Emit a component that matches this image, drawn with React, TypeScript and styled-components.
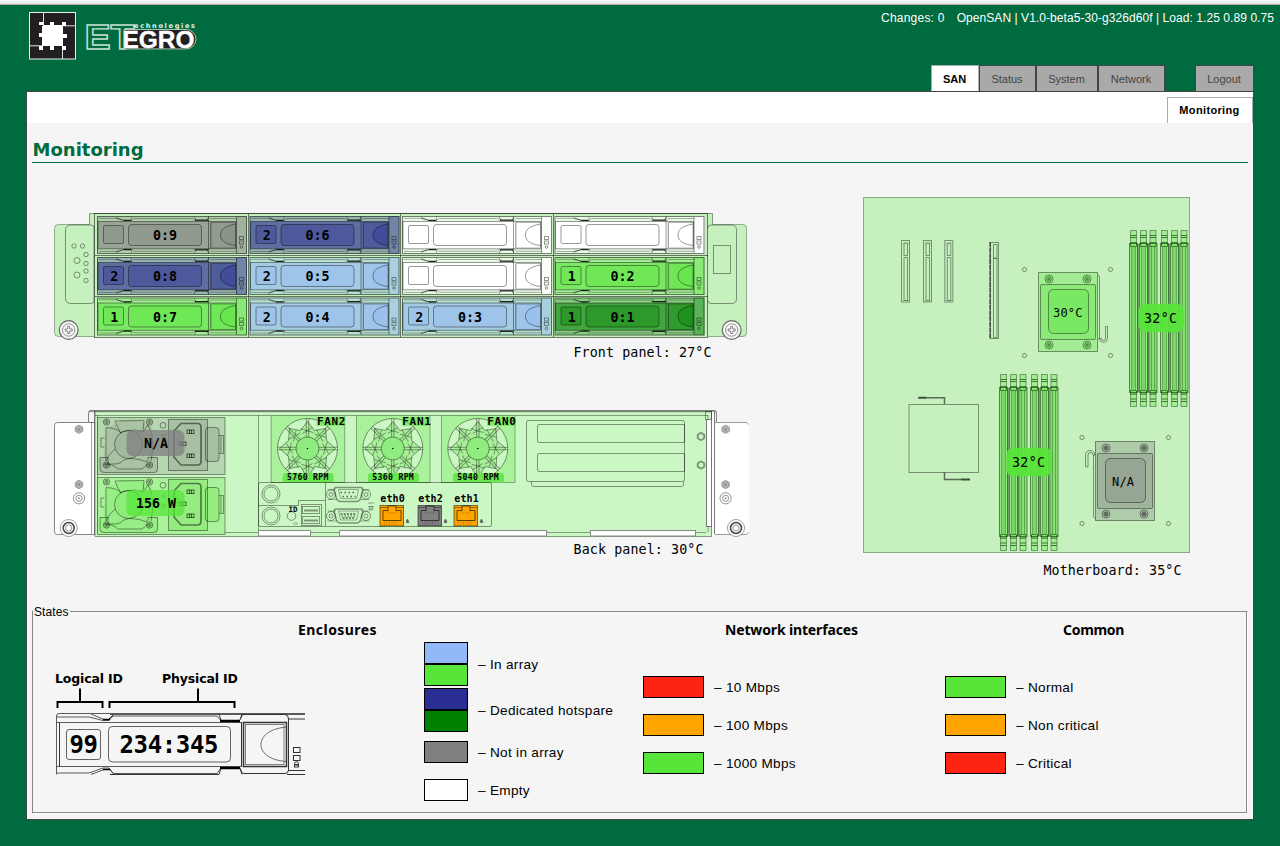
import React from 'react';
import styled, { createGlobalStyle } from 'styled-components';

const GREEN = '#006b3f';
const OK = '#57e539';
const BOARD = '#c6f0be';
const MONO = '"DejaVu Sans Mono", monospace';
const SANS = '"Liberation Sans", Arial, sans-serif';

const Global = createGlobalStyle`
  body { margin: 0; background: ${GREEN}; font-family: ${SANS}; font-size: 12px; color: #000; }
  svg { display: block; }
`;

const Page = styled.div`
  width: 1280px;
  height: 846px;
  box-sizing: border-box;
  overflow: hidden;
  background: ${GREEN};
`;
const TopEdge = styled.div`
  height: 5px;
  background: linear-gradient(#fff 0 1px, #efefee 1px 3px, #e3e1de 3px 4px, #b5b1a9 4px 5px);
`;
const Header = styled.header`
  height: 60px;
  box-sizing: border-box;
  display: flex;
  justify-content: space-between;
  padding: 5px 6px 0 27px;
`;
const StatusLine = styled.div`
  display: flex;
  gap: 12px;
  padding-top: 1px;
  color: #fff;
  line-height: 14px;
  white-space: pre;
`;
const StatusText = styled.span<{ $ls: number }>`
  letter-spacing: ${p => p.$ls}px;
`;
const TabBar = styled.nav`
  height: 26px;
  display: flex;
  justify-content: flex-end;
  padding-right: 26px;
`;
const Tab = styled.a<{ $w: number; $active?: boolean; $gap?: number }>`
  box-sizing: border-box;
  width: ${p => p.$w}px;
  margin-left: ${p => p.$gap ?? 0}px;
  padding-right: 1px;
  border: 1px solid ${p => (p.$active ? '#aaa' : '#444')};
  border-bottom: 0;
  background: ${p => (p.$active ? '#fff' : '#a9a9a9')};
  color: ${p => (p.$active ? '#000' : '#444')};
  font-weight: ${p => (p.$active ? 'bold' : 'normal')};
  font-size: 11px;
  line-height: 27px;
  text-align: center;
`;
const Frame = styled.main`
  box-sizing: border-box;
  width: 1228px;
  height: 729px;
  margin-left: 26px;
  border: 1px solid #444;
  background: #f5f5f5;
`;
const SubBar = styled.div`
  height: 31px;
  background: #fff;
  display: flex;
  justify-content: flex-end;
  align-items: flex-end;
`;
const SubTab = styled.a`
  box-sizing: border-box;
  width: 86px;
  height: 26px;
  padding-right: 1px;
  border: 1px solid #aaa;
  border-bottom: 0;
  font: bold 11px/25px ${SANS};
  letter-spacing: 0.36px;
  text-align: center;
`;
const Title = styled.h1`
  box-sizing: border-box;
  margin: 0 5px;
  height: 40px;
  padding: 15px 0 0 0.6px;
  border-bottom: 1px solid ${GREEN};
  color: ${GREEN};
  font: bold 18px/24px "DejaVu Sans", sans-serif;
`;
const Diagrams = styled.section`
  display: flex;
  height: 440px;
  padding: 27px 0 0 21px;
  gap: 95px;
  box-sizing: border-box;
`;
const Panels = styled.div`
  display: flex;
  flex-direction: column;
`;
const States = styled.fieldset`
  box-sizing: border-box;
  width: 1216px;
  height: 211px;
  margin: 0 0 0 5px;
  padding: 0 0 0 17px;
  border: 1px solid;
  border-color: #888 #fff #fff #888;
  box-shadow: inset -1px -1px #888;
`;
const Legend = styled.legend`
  margin-left: -17px;
  padding: 2px 1px 0;
  line-height: 14px;
  letter-spacing: 0.1px;
  background: #f5f5f5;
`;
const Columns = styled.div`
  display: flex;
`;
const Group = styled.section<{ $w: number }>`
  width: ${p => p.$w}px;
`;
const GroupTitle = styled.h2<{ $pad: number; $ls: number }>`
  margin: 0;
  padding-left: ${p => p.$pad}px;
  font: bold 14px/20px "Noto Sans", sans-serif;
  letter-spacing: ${p => p.$ls}px;
  height: 23px;
  padding-top: 1px;
  box-sizing: border-box;
  white-space: nowrap;
`;
const EnclosureBody = styled.div`
  display: flex;
  gap: 117px;
`;
const StateList = styled.div<{ $top: number; $gap: number }>`
  display: flex;
  flex-direction: column;
  gap: ${p => p.$gap}px;
  padding-top: ${p => p.$top}px;
`;
const StateRow = styled.div<{ $top?: number }>`
  display: flex;
  align-items: center;
  gap: 10px;
  margin-top: ${p => p.$top ?? 0}px;
`;
const StateName = styled.span`
  padding-top: 2px;
  font-size: 13.6px;
  letter-spacing: 0.3px;
  line-height: 16px;
  white-space: nowrap;
`;
const Swatch = styled.div<{ $c: string; $w: number }>`
  box-sizing: border-box;
  width: ${p => p.$w}px;
  height: 22px;
  border: 1px solid #000;
  background: ${p => p.$c};
`;

const line = { fill: 'none', stroke: '#000', strokeOpacity: 0.4, strokeWidth: 1 } as const;

type LabelProps = { x: number; y: number; w?: number; size?: number; bold?: boolean; children: React.ReactNode };
const Label = ({ x, y, w, size = 13.33, bold, children }: LabelProps) => (
  <text x={x} y={y} fontFamily={MONO} fontSize={size} fontWeight={bold ? 700 : 400} textLength={w}>
    {children}
  </text>
);

const Logo = () => (
  <svg width="175" height="52" viewBox="27 10 175 52">
    <rect x="29.5" y="12.5" width="46" height="46.5" fill="#231f20" stroke="#e8f0ec" />
    <g fill="none" stroke="#d8e4de">
      <path d="M43.5 13V26M62 25.8H75M30 45.8H43M62.5 46V59" />
    </g>
    <path
      fill="#fff"
      d="M43 26V25H39V22H43V25H50V22H54V25H62V22H66V26H63V34H67V38H63V46H66V50H62V46H54V50H50V46H43V50H39V46H42V37H39V33H42V26Z"
    />
    <text x="84.500" y="48.600" fontFamily={SANS} fontWeight="700" fontSize="35" textLength="50" lengthAdjust="spacingAndGlyphs" fill={GREEN} stroke="#c4ddd0" strokeWidth="1.4">ET</text>
    <path d="M124 29.500H186a10 9.700 0 0 1 0 19.400H124Z" fill="#231f20" stroke="#cfe2d8" strokeWidth=".8" />
    <text x="122.500" y="47.700" fontFamily={SANS} fontWeight="700" fontSize="24" textLength="72" lengthAdjust="spacingAndGlyphs" fill="#fff" stroke="#fff" strokeWidth=".4">EGRO</text>
    <text x="134" y="27.6" fontFamily='"DejaVu Sans", sans-serif' fontWeight="700" fontSize="6.6" textLength="61" fill="#e6f1ec">echnologies</text>
  </svg>
);

type DriveData = { col: number; row: number; c: string; logical?: string; id?: string };
const BLUE = '#93b8f7';
const NAVY = '#2a2e92';
const DARK = '#008000';
const GREY = '#808080';
const drives: DriveData[] = [
  { col: 0, row: 0, c: GREY, id: '0:9' },
  { col: 1, row: 0, c: NAVY, logical: '2', id: '0:6' },
  { col: 2, row: 0, c: '#fff' },
  { col: 3, row: 0, c: '#fff' },
  { col: 0, row: 1, c: NAVY, logical: '2', id: '0:8' },
  { col: 1, row: 1, c: BLUE, logical: '2', id: '0:5' },
  { col: 2, row: 1, c: '#fff' },
  { col: 3, row: 1, c: OK, logical: '1', id: '0:2' },
  { col: 0, row: 2, c: OK, logical: '1', id: '0:7' },
  { col: 1, row: 2, c: BLUE, logical: '2', id: '0:4' },
  { col: 2, row: 2, c: BLUE, logical: '2', id: '0:3' },
  { col: 3, row: 2, c: DARK, logical: '1', id: '0:1' },
];
const colX = [97, 249.5, 402, 554.5];
const rowY = [216, 257, 297.5];

const Drive = ({ col, row, c, logical, id }: DriveData) => {
  const white = c === '#fff';
  return (
    <g transform={`translate(${colX[col]} ${rowY[row]})`}>
      <rect width="150" height="37.8" fill={c} fillOpacity={white ? 0.6 : 0.3} />
      <rect x="139" width="11" height="37.8" fill={c} fillOpacity={white ? 0.8 : 0.35} />
      <rect x=".7" y="5.5" width="138" height="27.3" fill={c} fillOpacity={white ? 0.95 : 0.52} />
      <rect x="6.5" y="9.5" width="20" height="18" fill={c} fillOpacity=".32" />
      <rect x="31.5" y="8.5" width="73" height="21" rx="3" fill={c} fillOpacity=".32" />
      <rect x="114" y="6.5" width="24.5" height="25.5" fill={c} fillOpacity=".28" />
      <path d="M138.5 8C127 10 123.5 14 123.5 19S127 28 138.5 29.5Z" fill={c} fillOpacity=".35" />
      <g {...line}>
        <rect x=".5" y=".5" width="149" height="37" strokeOpacity=".5" />
        <path d="M2 2.3H19l9 2.2H34L37 2.5H95l3 2h14l2-2h26M2 35.5H19l9-2.2H34l3 2h58l3-2h14l2 2h26M34.5 .5V5M34.5 33V37" strokeOpacity=".3" />
        <rect x="1" y="5.500" width="138" height="27.300" />
        <rect x="6.500" y="9.500" width="20" height="18" rx="1.500" />
        <rect x="31.500" y="8.500" width="73" height="21" rx="3" />
        <path d="M111.500 .5V37M139.500 1V37" />
        <path d="M113.500 6.500V32" strokeOpacity=".2" />
        <rect x="114" y="6.500" width="24.500" height="25.500" strokeOpacity=".3" />
        <path d="M138.500 8C127 10 123.500 14 123.500 19S127 28 138.500 29.500" />
        <g strokeOpacity=".45" strokeWidth=".9">
          <rect x="142.500" y="20.500" width="4" height="3" />
          <rect x="142.500" y="25" width="4" height="3" />
          <circle cx="144.500" cy="31" r="1.300" />
        </g>
        <path d="M19 1.800l9 3M19 36.200l9-3" strokeOpacity=".5" />
      </g>
      <path d="M98 4.200H111M98 33.800H111M27 4.300h7M27 33.600h7" stroke="#000" strokeOpacity=".8" strokeWidth="1.300" />
      <path d="M97 1l2 3M112 1l-2 3M97 37l2-3M112 37l-2-3" stroke="#000" strokeOpacity=".5" />
      {logical && <Label bold x={13.3} y={24}>{logical}</Label>}
      {id && <Label bold x={56} y={24}>{id}</Label>}
    </g>
  );
};

const Screw = ({ x, y }: { x: number; y: number }) => (
  <g transform={`translate(${x} ${y})`} fill="#f7f7f7" stroke="#666">
    <circle r="9.4" strokeWidth="1.2" />
    <circle r="6.2" fill="none" stroke="#888" strokeWidth=".9" />
    <path d="M-1 -3.5H1V-1H3.5V1H1V3.5H-1V1H-3.5V-1H-1Z" fill="#fff" strokeWidth=".8" />
  </g>
);

const FrontPanel = () => (
  <svg width="715" height="190" viewBox="48 190 715 190">
    <g fill={BOARD} stroke="#7d9a79">
      <rect x="54.5" y="224.5" width="45" height="112" rx="4" strokeOpacity=".8" />
      <path d="M700 224.5H743a3.5 3.5 0 0 1 3.5 3.5V333a3.5 3.5 0 0 1-3.5 3.5H700" strokeOpacity=".8" />
      <path d="M89.5 225V213.5H712.5V225H708V337.5H94.5V225Z" stroke="none" />
      <path d="M89.5 224.5V213.5H712.5V224.5" fill="none" />
    </g>
    <g {...line}>
      <path d="M65.5 230a5 5 0 0 1 5-5H91a3 3 0 0 1 3 3V300.500a3 3 0 0 1-3 3H70.5a5 5 0 0 1-5-5Z" />
      <path d="M708 228a3 3 0 0 1 3-3H732a4.500 4.500 0 0 1 4.500 4.500V299a4.500 4.500 0 0 1-4.500 4.500H711a3 3 0 0 1-3-3" />
      <rect x="713.5" y="245.5" width="17" height="28" />
      <circle cx="74" cy="246" r="2.2" /><circle cx="82.500" cy="246" r="2.2" />
      <circle cx="77" cy="260.500" r="3" /><circle cx="77" cy="275" r="3" />
      <circle cx="86" cy="254.500" r="2.2" /><circle cx="86" cy="263.500" r="2.2" />
      <circle cx="86" cy="271" r="2.2" /><circle cx="86" cy="280.500" r="2.2" />
      <rect x="94.5" y="213.5" width="613" height="124" strokeOpacity=".5" />
      <path d="M95 255.500H708M95 296.500H708M248.500 214V337M400.500 214V337M553.500 214V337" strokeOpacity=".5" />
    </g>
    {drives.map(d => <Drive key={`${d.col}-${d.row}`} {...d} />)}
    <Screw x={68.7} y={330} />
    <Screw x={731.7} y={330} />
    <Label x={573.5} y={357} w={138}>Front panel: 27°C</Label>
  </svg>
);

const Nut = ({ x, y, r = 4 }: { x: number; y: number; r?: number }) => (
  <g transform={`translate(${x} ${y})`} fill="none" stroke="#000" strokeOpacity=".48" strokeWidth=".9">
    <circle r={r} />
    <circle r={r * 0.55} />
    <circle r=".6" />
  </g>
);
const Hex = ({ x, y }: { x: number; y: number }) => (
  <path transform={`translate(${x} ${y})`} d="M0 -4.200L3.700 -2.100V2.100L0 4.200L-3.700 2.100V-2.100Z" {...line} />
);
const EarBolts = ({ x, big }: { x: number; big: number }) => (
  <g>
    <Hex x={x} y={429.300} /><Nut x={x} y={429.300} r={2.800} />
    <Hex x={x} y={484.500} /><Nut x={x} y={484.500} r={2.800} />
    <Nut x={x} y={498.300} r={5.600} />
    <g transform={`translate(${big} 528)`} fill="#fff" stroke="#444">
      <circle r="8.500" stroke="#888" strokeWidth=".8" />
      <circle r="5.500" strokeWidth="1.500" />
      <circle r="3.200" stroke="#777" strokeWidth=".8" />
    </g>
  </g>
);

const Psu = ({ y, c, base, text, tx }: { y: number; c: string; base: string; text: string; tx: number }) => (
  <g transform={`translate(98 ${y})`}>
    <rect x="-.5" y=".5" width="127.500" height="57" fill={base} stroke="#000" strokeOpacity=".4" />
    <path d="M2 40V55.500H59.500V40H56L54 10 40 3H24L8 12 6 40Z" fill={c} fillOpacity=".22" />
    <rect x="70.500" y="2.500" width="39" height="51" fill={c} fillOpacity=".25" />
    <rect x="107.500" y="10.500" width="13.500" height="34" rx="3" fill={c} fillOpacity=".25" />
    <circle cx="30.500" cy="27.500" r="14" fill={c} fillOpacity=".15" />
    <g {...line}>
      <circle cx="30.500" cy="27.500" r="14" />
      <path d="M17 4L46 3.500 45 15Q38 12 30 13.500T23 16Q19 10 17 4Z" />
      <path d="M8 10.500Q19 11 23 16M8 10.500V44Q10 38 17 32M45 15L50 8Q58 20 53 44" />
      <path d="M2 40.500H10V47H18Q22 47 26 43L31 41.500Q42 42 46 44T50 40.500H59.500V52Q59.500 55.500 56 55.500H6Q2 55.500 2 52Z" />
      <path d="M6 47Q15 47 20 52H44L50 47M3 21V30M6.500 21H3M6.500 30H3" />
      <circle cx="65" cy="8.300" r="2.900" />
      <circle cx="65.500" cy="19" r="1.700" /><circle cx="65.500" cy="29" r="1.700" />
      <rect x="70.500" y="2.500" width="39" height="51" />
      <rect x="107.500" y="10.500" width="13.500" height="34" rx="3" />
      <path d="M121 18.500H125.500V36.500H121M123 19V36" />
      <path d="M83 6.500H99.500Q103 6.500 103 10V44Q103 48 99.500 48H83L76 40V14Z" strokeWidth="1.700" strokeOpacity=".48" />
      {[[89, 13], [81, 25], [89, 37]].map(([px, py]) => (
        <g key={py}><rect x={px} y={py} width="7" height="3.500" strokeOpacity=".6" /><path d={`M${px + 2.500} ${py}v3.500M${px + 4.500} ${py}v3.500`} strokeOpacity=".6" /></g>
      ))}
    </g>
    <Nut x={8.500} y={5} r={3.200} /><Nut x={51.500} y={5} r={3.200} /><Nut x={8.500} y={48} r={3.200} /><Nut x={51.500} y={48} r={3.200} />
    <rect x="28.500" y="13" width="58" height="26" rx="6" fill={c} fillOpacity=".75" />
    <Label bold x={tx} y={31}>{text}</Label>
  </g>
);

const Fan = ({ x, name, rpm }: { x: number; name: string; rpm: string }) => (
  <g transform={`translate(${x} 415)`}>
    <rect x=".5" y=".5" width="73.500" height="67" fill="#a9f19b" stroke="#5f8f57" strokeOpacity=".7" />
    <circle cx="36.800" cy="33.500" r="30" fill="#cbf7c4" stroke="#6b9065" />
    <g transform="translate(36.800 33.500)">
      <path
        d="M0-27 7-18 18-20 19-8 28 0 19 8 18 20 7 18 0 30-7 18-18 20-19 8-28 0-19-8-18-20-7-18Z"
        fill="#a9f19b" stroke="#000" strokeOpacity=".4"
      />
      {[0, 45, 90, 135, 180, 225, 270, 315].map(a => (
        <g key={a} transform={`rotate(${a})`} fill="#a9f19b" stroke="#000" strokeOpacity=".38">
          <path d="M-1.200-11V-30M1.200-11V-30M-7-20Q0-17 6-16M-5-15L5-21" />
        </g>
      ))}
      <circle r="11.500" fill="#8fec7e" stroke="#000" strokeOpacity=".4" />
      <circle r=".8" />
    </g>
    <rect x="46" y="2" width="28" height="9" fill="#6ee455" fillOpacity=".7" />
    <rect x="12" y="58" width="51" height="9.500" rx="3" fill="#69e550" />
    <Label bold x={46.300} y={10} size={11} w={28.500}>{name}</Label>
    <Label bold x={16.300} y={65} size={8.200} w={41.500}>{rpm}</Label>
  </g>
);

const Eth = ({ x, c, name }: { x: number; c: string; name: string }) => (
  <g transform={`translate(${x} 505)`}>
    <rect x=".5" y=".5" width="23.500" height="20.500" fill={c} stroke="#000" strokeOpacity=".5" />
    <g {...line} strokeOpacity={0.6}>
      <path d="M3.500 5.500H8.500V1H16.500V5.500H21.500V15.500H3.500Z" />
      <path d="M8.500 5.500V8H16.500V5.500M5 16v4M7.500 16v4M10 16v4M12.500 16v4M15 16v4M17.500 16v4" strokeOpacity=".15" />
      <path d="M1 2.500H8M17 2.500H24" strokeOpacity=".4" />
    </g>
    <path d="M26.500 17.500 27.500 14.500h1l1 3Z" fill="#555" stroke="#555" strokeWidth=".5" />
    <Label bold x={.8} y={-3} size={10} w={24.500}>{name}</Label>
  </g>
);

const Connector = ({ y, dense }: { y: number; dense?: boolean }) => (
  <g transform={`translate(348.500 ${y})`} {...line}>
    <path d="M-13-7H13Q15 -6 14-3L12 4Q11 7 8 7H-8Q-11 7-12 4L-14-3Q-15-6-13-7Z" strokeWidth="1.400" />
    <path d="M-10-5H10L8 4H-8Z" strokeOpacity=".3" />
    <path d="M-8-2H8M-6 2H7" strokeWidth="1.600" strokeDasharray={dense ? '2 1.200' : '1.500 2.500'} strokeOpacity=".6" />
    {dense && <path d="M-7 0H8" strokeDasharray="1.500 1.500" strokeOpacity=".6" />}
    <circle cx="-17.500" r="4.500" /><circle cx="-17.500" r="2" />
    <circle cx="17.500" r="4.500" /><circle cx="17.500" r="2" />
    <path d="M-21-5H-13M13-5H21M-21 5H-12M12 5H21" strokeOpacity=".3" />
  </g>
);

const BackPanel = () => (
  <svg width="715" height="195" viewBox="48 380 715 195">
    <g stroke="#858585">
      <path d="M95 422.500H57.500a3 3 0 0 0-3 3V531.500a3 3 0 0 0 3 3H95Z" fill="#fff" />
      <path d="M715 422.500H749V534.500H715Z" fill="#fff" stroke="none" />
      <path d="M715 422.500H746a3 3 0 0 1 2.500 2M748.500 532a3 3 0 0 1-2.500 2.500H715" fill="none" stroke="#999" />
      <path d="M88.500 422V413Q88.500 410.500 91 410.500H714Q716.500 410.500 716.500 413V422" fill="#f2f5f2" />
    </g>
    <path d="M95 411H711.500V536.500H95Z" fill="#cbf7c4" stroke="#7f9b7a" />
    <g {...line}>
      <path d="M89 411.500H716" strokeWidth="1.300" strokeOpacity=".32" />
      <path d="M91.500 422V534M94.500 411V535M97.500 415V533M95 415.500H708M98 532.500H706M258.500 415V532M708 415V532" strokeOpacity=".36" />
      <rect x="526.500" y="420.500" width="158" height="61" rx="2" />
      <path d="M684.500 424.500H539a1.500 1.500 0 0 0-1.500 1.500V441a1.500 1.500 0 0 0 1.500 1.500H684.500ZM684.500 453.500H539a1.500 1.500 0 0 0-1.500 1.500V470a1.500 1.500 0 0 0 1.500 1.500H684.500Z" />
      <path d="M531.500 481.500V484.500Q531.500 486.500 534 486.500H681Q683.500 486.500 683.500 484.500V481.500" />
      <rect x="705.500" y="411.500" width="6" height="8" />
      <path d="M714.500 412V534" strokeOpacity=".5" />
    </g>
    <path d="M712 412H714V536H712Z" fill="#fff" />
    <rect x="706.500" y="419.500" width="5" height="107" fill="#fff" stroke="#777" />
    <Hex x={701} y={436.500} /><Hex x={701} y={465} />
    <circle cx="701" cy="436.500" r="3" {...line} /><circle cx="701" cy="465" r="3" {...line} />
    <g fill="#fff" stroke="#8a8a8a">
      <rect x="258.500" y="530.500" width="52" height="5.500" />
      <rect x="339.500" y="530.500" width="207" height="5.500" />
      <rect x="590.500" y="530.500" width="105" height="5.500" />
    </g>
    <EarBolts x={79} big={68.700} />
    <EarBolts x={725.600} big={736} />
    <Psu y={417} c="#808080" base="#b5d6ae" text="N/A" tx={46} />
    <Psu y={477} c={OK} base="#aaf19b" text="156 W" tx={38} />
    <Fan x={270.700} name="FAN2" rpm="5760 RPM" />
    <Fan x={356} name="FAN1" rpm="5360 RPM" />
    <Fan x={441} name="FAN0" rpm="5040 RPM" />
    <g {...line}>
      <rect x="258.500" y="482.500" width="233" height="44" rx="1.500" />
      <path d="M325.500 483V526M259 505.500H298.500V500.500H325" />
      <circle cx="271" cy="494" r="9" /><circle cx="271" cy="494" r="7" />
      <circle cx="271" cy="516" r="9" /><circle cx="271" cy="516" r="7" />
      <circle cx="291.500" cy="516" r="4.300" /><ellipse cx="295.500" cy="523.500" rx="2" ry="1" strokeOpacity=".25" />
      <rect x="301.500" y="504.500" width="20" height="21" />
      <rect x="302.500" y="506.500" width="17" height="7" /><rect x="302.500" y="516.500" width="17" height="7" />
      <path d="M304 510.500H318M304 520.500H318" strokeWidth="2" />
      <path d="M368 503H374M368 506.500h6M369 509h4" strokeOpacity=".35" />
      <circle cx="371" cy="508.500" r="1.800" strokeOpacity=".3" />
    </g>
    <Label bold x={288.500} y={511.500} size={7.500}>ID</Label>
    <Connector y={494.500} />
    <Connector y={516} dense />
    <Eth x={379.500} c="#ffa500" name="eth0" />
    <Eth x={417.500} c="#808080" name="eth2" />
    <Eth x={453.500} c="#ffa500" name="eth1" />
    <Label x={573.500} y={554} w={130}>Back panel: 30°C</Label>
  </svg>
);

const dimmX = [0, 10, 19.500, 31, 41, 50.500];
const DimmBank = ({ x, y, pillX, pillY }: { x: number; y: number; pillX: number; pillY: number }) => (
  <g>
    <g transform={`translate(${x} ${y})`}>
      <path d="M8 14h2V162H8ZM18 14h2V162H18ZM39 14h2V162H39ZM48.500 14h2V162H48.500Z" fill="#7a9a74" />
      {dimmX.map(dx => (
        <g key={dx} transform={`translate(${dx} 0)`} fill="#a2ec93" stroke="#1f4d17" strokeOpacity=".65">
          <rect x=".5" y="14.500" width="8" height="147" fill="#8fee7c" />
          <path d="M2.800 16V160M6.200 16V160" strokeOpacity=".55" />
          <path d="M4.500 16V160" strokeOpacity=".15" />
          <path d="M1.500 .5H7.500V13H1.500ZM1.500 164H7.500V176.500H1.500Z" strokeOpacity=".5" />
          <path d="M1.500 5.500H7.500M1.500 7.500H7.500M1.500 169H7.500M1.500 171.500H7.500" strokeOpacity=".75" />
          <path d="M1.500 12.500H7.500V16.500H1.500ZM1.500 160.500H7.500V164H1.500Z" fill="#7de866" />
          <path d="M0 13.500H9M0 162.500H9" strokeOpacity=".7" />
        </g>
      ))}
    </g>
    <rect x={pillX} y={pillY} width="45.500" height="28.500" rx="7" fill={OK} fillOpacity=".93" />
    <Label x={pillX + 5.500} y={pillY + 19.200} w={33}>32°C</Label>
  </g>
);

const Cpu = ({ x, y, c, text, tx }: { x: number; y: number; c: string; text: string; tx: number }) => (
  <g transform={`translate(${x} ${y})`}>
    <g fill={c} stroke="#000" strokeOpacity=".4">
      <rect x=".5" y=".5" width="59" height="79" fillOpacity=".32" />
      <rect x="2.500" y="12.500" width="55" height="55" rx="1" fillOpacity=".3" />
      <rect x="10.500" y="17.500" width="40" height="44" rx="5" fillOpacity=".3" />
    </g>
    {[[11, 7], [49, 7], [11, 73], [49, 73]].map(([cx, cy]) => (
      <g key={`${cx}${cy}`} transform={`translate(${cx} ${cy})`}><circle r="2.500" fill={c} fillOpacity=".7" /><Nut x={0} y={0} r={4} /></g>
    ))}
    <Label x={tx} y={45} size={12} w={text.length * 7.350}>{text}</Label>
  </g>
);

const Slot = ({ x }: { x: number }) => (
  <g {...line}>
    <rect x={x} y="240.500" width="8" height="61.500" />
    <rect x={x + 2.500} y="243" width="3.500" height="12.500" /><rect x={x + 2.500} y="257.500" width="3.500" height="43" />
    <path d={`M${x} 244h8M${x} 300.500h8`} strokeOpacity=".1" />
  </g>
);
const holes = [[1024.500, 269.500], [1110.500, 269.500], [1024.500, 355.500], [1110.500, 355.500], [1082, 437.500], [1168.500, 437.500], [1082, 523.500], [1168.500, 523.500]];

const Motherboard = () => (
  <svg width="340" height="395" viewBox="858 190 340 395">
    <rect x="863.500" y="197.500" width="326" height="355" fill={BOARD} stroke="#8ba886" />
    <Slot x={901.500} /><Slot x={923.500} /><Slot x={944.800} />
    <g {...line}>
      <rect x="990.500" y="242.500" width="8" height="96" />
      <rect x="993.500" y="244.500" width="3.500" height="13.500" /><rect x="993.500" y="258.500" width="3.500" height="79" />
      <path d="M990 242V338.500" strokeWidth="1.600" strokeDasharray="5 .7" strokeOpacity=".55" />
      <rect x="909" y="404.500" width="69.500" height="68" />
      <path d="M918.500 397.700H944.500V404M944.500 472.500V479.500H970" strokeWidth="1.500" strokeOpacity=".55" />
      <path d="M918 397.800h8M961 479.500h9" strokeWidth="2.400" strokeOpacity=".3" />
      <path d="M1098 275Q1099.500 275 1099.500 278V338.500a4 4 0 0 0 8 0V326.500H1105.500V338.500a2 2 0 0 1-4 0L1098 339" />
      <path d="M1086 467H1088V455Q1088 452.500 1090.500 452.500T1093 455L1095 455Q1094 450.500 1090 450.500T1085.500 455V467M1093.500 455V516.500L1095.500 519" />
      {holes.map(([cx, cy]) => <circle key={`${cx}-${cy}`} cx={cx} cy={cy} r="2.100" />)}
    </g>
    <Cpu x={1038} y={272} c={OK} text="30°C" tx={15} />
    <Cpu x={1095} y={441} c="#808080" text="N/A" tx={17} />
    <DimmBank x={1129} y={230} pillX={1138.500} pillY={303.800} />
    <DimmBank x={999} y={374} pillX={1006.500} pillY={447.800} />
    <Label x={1043.500} y={575} w={138}>Motherboard: 35°C</Label>
  </svg>
);

const DriveKey = () => (
  <svg width="257" height="141" viewBox="50 642 257 141">
    <g fontFamily='"DejaVu Sans", sans-serif' fontWeight="700" fontSize="12.500">
      <text x="55" y="683" textLength="68">Logical ID</text>
      <text x="162" y="683" textLength="76">Physical ID</text>
    </g>
    <path d="M57.500 708V702H102.500V708M80 702V688.500M109.500 708V702H234.500V708M198 702V688.500" fill="none" stroke="#000" strokeWidth="2" />
    <g fill="none" stroke="#333" strokeWidth="1">
      <path d="M56.500 774.500V716Q56.500 713.500 59 713.500H305M110 714.500H305M57 717H89L103 720.500H109L113 716H217L221 721M91 714L104 719.500M56.500 722.500H241M56.500 766.500H241M57 773H89L103 768H109L113 773.500H217L221 768M91 774.500L104 769.500" strokeOpacity=".8" />
      <path d="M113.500 714.500 109 719M113.500 773.500 109 768.500M110 774.500H219M219 714.500 221 720M240 720 242 714.500M219 774.500 221 768M240 768 242 774.500" />
      <path d="M59.500 722.500V766.500M241.500 722V767M243.500 722V767M241 718Q241 714.500 244 714.500H285Q288.500 715 288.500 719V770Q288.500 773.500 285 773.500H244Q241 773.500 241 770M288.500 719H305M288.500 770.500H305M287 774.500H305" />
      <rect x="243.500" y="722.500" width="43" height="44" strokeWidth="1.500" />
      <rect x="245.500" y="724.500" width="38.500" height="40" strokeOpacity=".6" />
      <path d="M286 727C268 729 261 737 261 744.500S268 760 286 761.500" strokeOpacity=".7" />
      <rect x="66.500" y="729.500" width="34" height="30" rx="2.500" strokeOpacity=".75" />
      <rect x="108.500" y="726.500" width="122" height="35.500" rx="4" strokeOpacity=".75" />
      <rect x="293.500" y="747.500" width="6.500" height="5" /><rect x="293.500" y="755.500" width="6.500" height="5" />
      <circle cx="296.500" cy="763.500" r="1.800" /><rect x="294.500" y="764.500" width="4" height="2.500" />
    </g>
    <path d="M220 721H240M220 768H240" stroke="#000" strokeWidth="2.500" />
    <path d="M103 719.500h7M103 769.500h7" stroke="#000" strokeWidth="1.500" />
    <Label bold x={69.500} y={753} size={24} w={28.500}>99</Label>
    <Label bold x={119.500} y={753} size={24} w={99}>234:345</Label>
  </svg>
);

const SpeedList = ({ items }: { items: [string, string][] }) => (
  <StateList $top={34} $gap={16}>
    {items.map(([c, t]) => (
      <StateRow key={t}><Swatch $c={c} $w={61} /><StateName>– {t}</StateName></StateRow>
    ))}
  </StateList>
);

export default function App() {
  return (
    <Page>
      <Global />
      <TopEdge />
      <Header>
        <Logo />
        <StatusLine>
          <StatusText $ls={0.22}>Changes: 0</StatusText>
          <StatusText $ls={0.065}>OpenSAN | V1.0-beta5-30-g326d60f | Load: 1.25 0.89 0.75</StatusText>
        </StatusLine>
      </Header>
      <TabBar>
        <Tab $w={48} $active>SAN</Tab>
        <Tab $w={57}>Status</Tab>
        <Tab $w={62}>System</Tab>
        <Tab $w={67}>Network</Tab>
        <Tab $w={59} $gap={30}>Logout</Tab>
      </TabBar>
      <Frame>
        <SubBar><SubTab>Monitoring</SubTab></SubBar>
        <Title>Monitoring</Title>
        <Diagrams>
          <Panels>
            <FrontPanel />
            <BackPanel />
          </Panels>
          <Motherboard />
        </Diagrams>
        <States>
          <Legend>States</Legend>
          <Columns>
            <Group $w={593}>
              <GroupTitle $pad={248} $ls={0.45}>Enclosures</GroupTitle>
              <EnclosureBody>
                <DriveKey />
                <StateList $top={0} $gap={0}>
                  <StateRow><div><Swatch $c={BLUE} $w={44} /><Swatch $c={OK} $w={44} /></div><StateName>– In array</StateName></StateRow>
                  <StateRow $top={2}><div><Swatch $c={NAVY} $w={44} /><Swatch $c={DARK} $w={44} /></div><StateName>– Dedicated hotspare</StateName></StateRow>
                  <StateRow $top={9}><Swatch $c={GREY} $w={44} /><StateName>– Not in array</StateName></StateRow>
                  <StateRow $top={16}><Swatch $c="#fff" $w={44} /><StateName>– Empty</StateName></StateRow>
                </StateList>
              </EnclosureBody>
            </Group>
            <Group $w={302}>
              <GroupTitle $pad={82} $ls={-0.15}>Network interfaces</GroupTitle>
              <SpeedList items={[['#ff2312', '10 Mbps'], ['#ffa500', '100 Mbps'], [OK, '1000 Mbps']]} />
            </Group>
            <Group $w={290}>
              <GroupTitle $pad={118} $ls={-0.3}>Common</GroupTitle>
              <SpeedList items={[[OK, 'Normal'], ['#ffa500', 'Non critical'], ['#ff2312', 'Critical']]} />
            </Group>
          </Columns>
        </States>
      </Frame>
    </Page>
  );
}
